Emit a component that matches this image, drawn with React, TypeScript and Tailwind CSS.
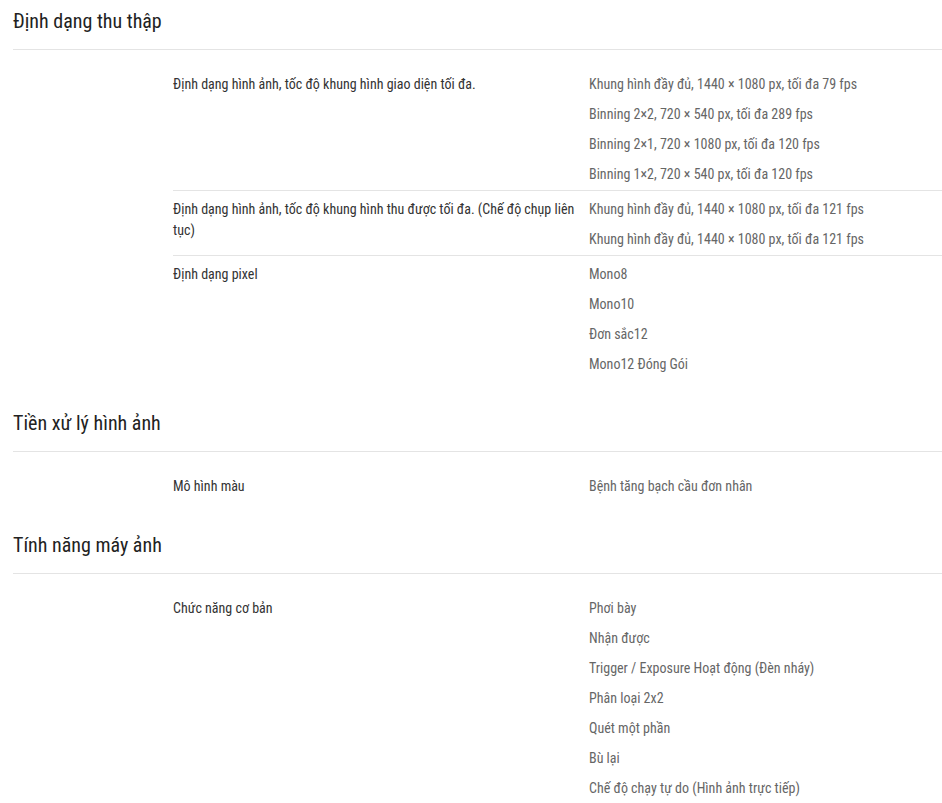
const sections: { title: string; rows: { label: string; values: string[] }[] }[] = [
  {
    title: "Định dạng thu thập",
    rows: [
      {
        label: "Định dạng hình ảnh, tốc độ khung hình giao diện tối đa.",
        values: [
          "Khung hình đầy đủ, 1440 × 1080 px, tối đa 79 fps",
          "Binning 2×2, 720 × 540 px, tối đa 289 fps",
          "Binning 2×1, 720 × 1080 px, tối đa 120 fps",
          "Binning 1×2, 720 × 540 px, tối đa 120 fps",
        ],
      },
      {
        label: "Định dạng hình ảnh, tốc độ khung hình thu được tối đa. (Chế độ chụp liên tục)",
        values: [
          "Khung hình đầy đủ, 1440 × 1080 px, tối đa 121 fps",
          "Khung hình đầy đủ, 1440 × 1080 px, tối đa 121 fps",
        ],
      },
      {
        label: "Định dạng pixel",
        values: ["Mono8", "Mono10", "Đơn sắc12", "Mono12 Đóng Gói"],
      },
    ],
  },
  {
    title: "Tiền xử lý hình ảnh",
    rows: [{ label: "Mô hình màu", values: ["Bệnh tăng bạch cầu đơn nhân"] }],
  },
  {
    title: "Tính năng máy ảnh",
    rows: [
      {
        label: "Chức năng cơ bản",
        values: [
          "Phơi bày",
          "Nhận được",
          "Trigger / Exposure Hoạt động (Đèn nháy)",
          "Phân loại 2x2",
          "Quét một phần",
          "Bù lại",
          "Chế độ chạy tự do (Hình ảnh trực tiếp)",
        ],
      },
    ],
  },
];

export default function App() {
  return (
    <div className="min-h-screen bg-white pl-[13px] pt-[7px] font-['Roboto',sans-serif] font-stretch-condensed">
      {sections.map((s, i) => (
        <section key={s.title} className={i > 0 ? "mt-[29px]" : ""}>
          <h2 className="border-b border-[#e4e4e4] pb-[14px] text-[20px] leading-[28px] text-[#222]">
            {s.title}
          </h2>
          <div className="ml-[160px] mt-[16px]">
            {s.rows.map((r, j) => (
              <div
                key={j}
                className={
                  "grid grid-cols-[408px_1fr] gap-x-2 pt-2 pb-[5px] text-[14px] leading-[21px] " +
                  (j < s.rows.length - 1 ? "border-b border-[#e4e4e4]" : "")
                }
              >
                <div className="text-[#333]">{r.label}</div>
                <div className="flex flex-col gap-[9px] text-[#666]">
                  {r.values.map((v, k) => (
                    <div key={k}>{v}</div>
                  ))}
                </div>
              </div>
            ))}
          </div>
        </section>
      ))}
    </div>
  );
}
